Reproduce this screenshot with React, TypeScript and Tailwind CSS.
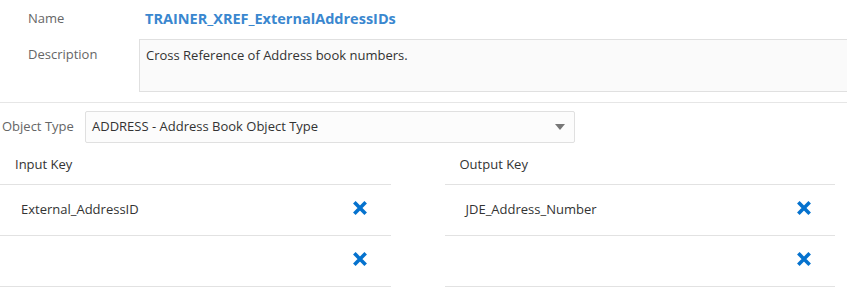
const font = { fontFamily: '"Open Sans", "Noto Sans", sans-serif' }

export default function App() {
  return (
    <div className="w-[847px] h-[299px] overflow-hidden bg-white text-[13px] text-[#333]" style={font}>
      {/* Name / Description */}
      <div className="pt-[8px] pb-[10px] border-b border-[#e6e6e6]">
        <div className="flex items-center h-[22px]">
          <div className="w-[139px] pl-[28px] text-[#666]">Name</div>
          <div className="pl-[6px] text-[14.5px] font-bold text-[#3a87cf]">TRAINER_XREF_ExternalAddressIDs</div>
        </div>
        <div className="flex mt-[9px]">
          <div className="w-[139px] pl-[28px] pt-[6px] text-[#666]">Description</div>
          <div className="flex-1 h-[53px] bg-[#fafafa] border border-r-0 border-[#e0e0e0] px-[6px] pt-[6px]">
            Cross Reference of Address book numbers.
          </div>
        </div>
      </div>

      {/* Object Type */}
      <div className="flex items-center mt-[8px]">
        <div className="w-[85px] pl-[2px] text-[#666]">Object Type</div>
        <div className="w-[490px] h-[32px] flex items-center justify-between border border-[#e0e0e0] rounded-[2px] bg-[#fcfcfc] pl-[6px] pr-[9px]">
          <span>ADDRESS - Address Book Object Type</span>
          <svg width="10" height="6" viewBox="0 0 10 6"><path d="M0 0h10L5 6z" fill="#777" /></svg>
        </div>
      </div>

      {/* Keys */}
      <div className="flex gap-[54px] mt-[9px] pr-[12px]">
        <KeyColumn title="Input Key" rows={["External_AddressID", ""]} />
        <KeyColumn title="Output Key" rows={["JDE_Address_Number", ""]} />
      </div>
    </div>
  )
}

function RemoveIcon() {
  return (
    <svg width="14" height="14" viewBox="0 0 14 14" className="mb-[3px]">
      <path d="M2.6 2.6L11.4 11.4M11.4 2.6L2.6 11.4" stroke="#0572ce" strokeWidth="3.6" strokeLinecap="square" />
    </svg>
  )
}

type KeyColumnProps = { title: string; rows: string[] }
function KeyColumn({ title, rows }: KeyColumnProps) {
  return (
    <div className="flex-1">
      <div className="h-[33px] pl-[15px] pb-[6px] flex items-center border-b border-[#e2e2e2]">{title}</div>
      {rows.map((r, i) => (
        <div key={i} className="h-[51px] flex items-center justify-between pl-[21px] pr-[24px] pb-[1px] border-b border-[#e2e2e2]">
          <span>{r}</span>
          <RemoveIcon />
        </div>
      ))}
    </div>
  )
}
